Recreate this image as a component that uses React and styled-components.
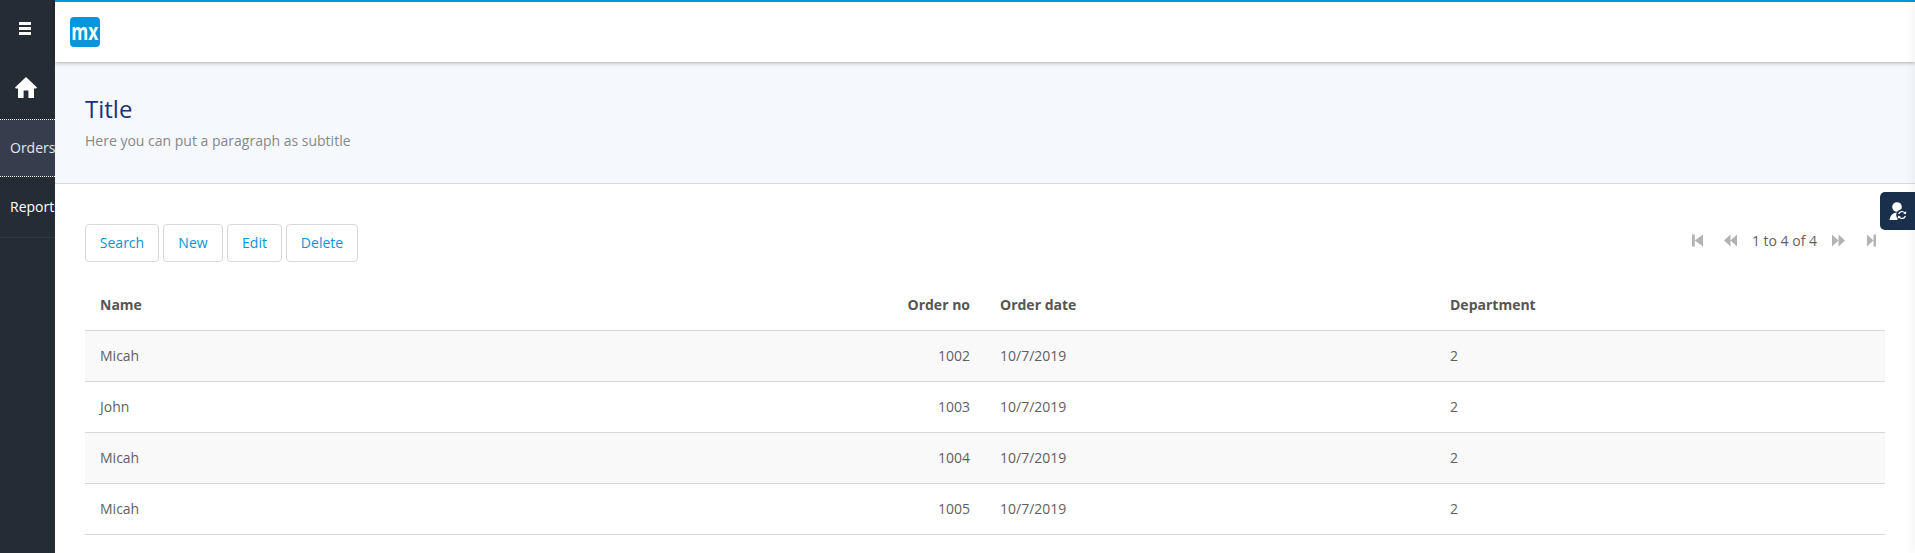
import React from "react";
import styled, { createGlobalStyle } from "styled-components";

const GlobalStyle = createGlobalStyle`
    html, body {
        margin: 0;
        padding: 0;
        height: 100%;
        overflow: hidden;
        background: #fff;
        font-family: "Open Sans", "Liberation Sans", sans-serif;
        font-size: 14px;
        color: #555;
    }
`

const Layout = styled.div`
    display: flex;
    height: 553px;
    width: 1915px;
    overflow: hidden;
    position: relative;
`

const Sidebar = styled.nav`
    width: 55px;
    flex: none;
    background: #252c36;
    display: flex;
    flex-direction: column;
    overflow: hidden;
`

const ToggleButton = styled.div`
    height: 56px;
    display: flex;
    align-items: center;
    justify-content: center;
    padding-right: 5px;
`

const HomeItem = styled.div`
    height: 63px;
    display: flex;
    align-items: center;
    justify-content: center;
    padding-right: 3px;
`

const MenuItem = styled.div`
    height: ${props => props.$active ? "54px" : "58px"};
    display: flex;
    align-items: center;
    padding: 0 0 2px 10px;
    white-space: nowrap;
    font-size: 14px;
    color: ${props => props.$active ? "#e6e7e9" : "#fff"};
    background: ${props => props.$active ? "#363e4d" : "transparent"};
    border-top: ${props => props.$active ? "1px dotted #fff" : "none"};
    border-bottom: ${props => props.$active ? "1px dotted #fff" : "1px solid #2f3742"};
`

const Main = styled.main`
    flex: 1;
    min-width: 0;
    display: flex;
    flex-direction: column;
`

const TopBar = styled.header`
    height: 60px;
    flex: none;
    border-top: 2px solid #0595db;
    background: #fff;
    display: flex;
    align-items: center;
    padding-left: 15px;
    box-shadow: 0 1px 4px rgba(0, 0, 0, 0.3);
    position: relative;
    z-index: 1;
`

const Logo = styled.div`
    width: 30px;
    height: 30px;
    border-radius: 4px;
    background: #0595db;
    color: #fff;
    display: flex;
    align-items: center;
    justify-content: center;
`

const LogoText = styled.span`
    font-size: 24px;
    font-weight: 700;
    line-height: 24px;
    margin-top: -3px;
    transform: scaleX(0.72);
`

const PageHeader = styled.section`
    height: 122px;
    flex: none;
    box-sizing: border-box;
    background: #f5f8fd;
    border-bottom: 1px solid #d7d8da;
    padding: 29px 30px 0;
`

const Title = styled.h1`
    margin: 0;
    font-size: 24px;
    font-weight: 400;
    line-height: 36px;
    color: #17347b;
`

const Subtitle = styled.p`
    margin: 4px 0 0;
    font-size: 14px;
    line-height: 20px;
    color: #888;
`

const Content = styled.section`
    padding: 40px 30px 0;
`

const Toolbar = styled.div`
    display: flex;
    justify-content: space-between;
    align-items: flex-start;
    height: 57px;
`

const Buttons = styled.div`
    display: flex;
    gap: 4px;
`

const Button = styled.button`
    width: ${props => props.$width}px;
    height: 38px;
    box-sizing: border-box;
    padding: 0 0 2px;
    font-family: inherit;
    font-size: 14px;
    color: #0595db;
    background: #fff;
    border: 1px solid #d7d8da;
    border-radius: 4px;
`

const Pager = styled.div`
    display: flex;
    align-items: center;
    height: 33px;
    margin-right: 7px;
    color: #5f5f5f;
`

const PagerIcon = styled.svg`
    width: 13px;
    height: 13px;
    fill: #b3b3b3;
    margin: ${props => props.$margin};
`

const Table = styled.div`
    display: flex;
    flex-direction: column;
`

const Row = styled.div`
    display: grid;
    grid-template-columns: 40% 10% 25% 25%;
    align-items: center;
    height: ${props => props.$header ? "50px" : "51px"};
    box-sizing: border-box;
    padding-bottom: 2px;
    border-bottom: 1px solid #d7d8da;
    background: ${props => props.$striped ? "#f9f9f9" : "#fff"};
    color: ${props => props.$header ? "#555" : "#5f5f5f"};
    font-weight: ${props => props.$header ? 700 : 400};
`

const Cell = styled.div`
    padding: ${props => props.$right ? "0 15px 0 0" : "0 0 0 15px"};
    text-align: ${props => props.$right ? "right" : "left"};
`

const EdgeShadow = styled.div`
    position: absolute;
    top: 0;
    right: -1px;
    bottom: 0;
    width: 1px;
    box-shadow: 0 0 9px rgba(0, 0, 0, 0.3);
    z-index: 2;
`

const ImpersonateTab = styled.div`
    position: absolute;
    right: 0;
    top: 192px;
    width: 35px;
    height: 38px;
    background: #1a2f4b;
    border-radius: 5px 0 0 5px;
    display: flex;
    align-items: center;
    justify-content: center;
    z-index: 3;
`

const orders = [
    { name: "Micah", no: 1002, date: "10/7/2019", department: 2 },
    { name: "John", no: 1003, date: "10/7/2019", department: 2 },
    { name: "Micah", no: 1004, date: "10/7/2019", department: 2 },
    { name: "Micah", no: 1005, date: "10/7/2019", department: 2 },
]

const HamburgerIcon = () => (
    <svg width="12" height="13" viewBox="0 0 12 13" fill="#fff">
        <rect x="0" y="0" width="12" height="3" />
        <rect x="0" y="5" width="12" height="3" />
        <rect x="0" y="10" width="12" height="3" />
    </svg>
)

const HomeIcon = () => (
    <svg width="22" height="21" viewBox="0 0 22 21" fill="#fff">
        <path d="M11 0 L22 10.5 L21.2 11.5 L19 11.5 L19 21 L13.4 21 L13.4 13.5 L8.6 13.5 L8.6 21 L3 21 L3 11.5 L0.8 11.5 L0 10.5 Z" />
    </svg>
)

const UserSyncIcon = () => (
    <svg width="20" height="20" viewBox="0 0 20 20">
        <circle cx="9" cy="6" r="4.8" fill="#fff" />
        <path d="M1.5 19 C2 14.5 5 11.5 9 11.5 L13 13 L9 19 Z" fill="#fff" />
        <circle cx="14" cy="14" r="5.8" fill="#1a2f4b" />
        <path d="M10.6 13 A3.6 3.6 0 0 1 16.8 11.8 M17.4 15 A3.6 3.6 0 0 1 11.2 16.2" fill="none" stroke="#fff" strokeWidth="1.2" />
        <path d="M18.2 10.2 L18 13.2 L15.2 12.4 Z M9.8 17.8 L10 14.8 L12.8 15.6 Z" fill="#fff" />
    </svg>
)

const pagerPaths = {
    first: "M1 0.5 H3.8 V12.5 H1 Z M12 0.5 V12.5 L3.8 6.5 Z",
    previous: "M6.5 0.5 V12.5 L0 6.5 Z M13 0.5 V12.5 L6.5 6.5 Z",
    next: "M0 0.5 L6.5 6.5 L0 12.5 Z M6.5 0.5 L13 6.5 L6.5 12.5 Z",
    last: "M2 0.5 L8.5 6.5 L2 12.5 Z M8.5 0.5 H11 V12.5 H8.5 Z",
}

const PagerButton = ({ kind, margin }) => (
    <PagerIcon viewBox="0 0 13 13" $margin={margin}>
        <path d={pagerPaths[kind]} />
    </PagerIcon>
)

export default function App() {
    return (
        <Layout>
            <GlobalStyle />
            <Sidebar>
                <ToggleButton><HamburgerIcon /></ToggleButton>
                <HomeItem><HomeIcon /></HomeItem>
                <MenuItem $active>Orders</MenuItem>
                <MenuItem>Reports</MenuItem>
            </Sidebar>
            <Main>
                <TopBar>
                    <Logo><LogoText>mx</LogoText></Logo>
                </TopBar>
                <PageHeader>
                    <Title>Title</Title>
                    <Subtitle>Here you can put a paragraph as subtitle</Subtitle>
                </PageHeader>
                <Content>
                    <Toolbar>
                        <Buttons>
                            <Button $width={74}>Search</Button>
                            <Button $width={60}>New</Button>
                            <Button $width={55}>Edit</Button>
                            <Button $width={72}>Delete</Button>
                        </Buttons>
                        <Pager>
                            <PagerButton kind="first" margin="0 20px 0 0" />
                            <PagerButton kind="previous" margin="0 15px 0 0" />
                            <span>1 to 4 of 4</span>
                            <PagerButton kind="next" margin="0 20px 0 15px" />
                            <PagerButton kind="last" margin="0" />
                        </Pager>
                    </Toolbar>
                    <Table>
                        <Row $header>
                            <Cell>Name</Cell>
                            <Cell $right>Order no</Cell>
                            <Cell>Order date</Cell>
                            <Cell>Department</Cell>
                        </Row>
                        {orders.map((order, index) => (
                            <Row key={order.no} $striped={index % 2 === 0}>
                                <Cell>{order.name}</Cell>
                                <Cell $right>{order.no}</Cell>
                                <Cell>{order.date}</Cell>
                                <Cell>{order.department}</Cell>
                            </Row>
                        ))}
                    </Table>
                </Content>
            </Main>
            <EdgeShadow />
            <ImpersonateTab><UserSyncIcon /></ImpersonateTab>
        </Layout>
    )
}
